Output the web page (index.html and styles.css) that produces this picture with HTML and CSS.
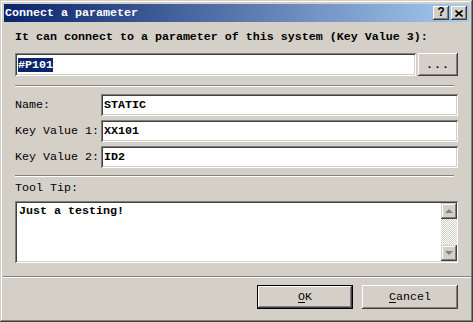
FILE: index.html
```html
<!DOCTYPE html>
<html>
<head>
<meta charset="UTF-8">
<title>Connect a parameter</title>
<link rel="stylesheet" href="styles.css">
</head>
<body>

<div class="window">
	<div class="titlebar">
		<span class="titletext">Connect a parameter</span>
		<span class="tbtn help">?</span>
		<span class="tbtn close">
			<svg width="8" height="7" viewBox="0 0 8 7"><path d="M0.5 0.5 L7.5 6.5 M7.5 0.5 L0.5 6.5" stroke="#000" stroke-width="1.6"/></svg>
		</span>
	</div>

	<div class="content">
		<div class="toplabel">It can connect to a parameter of this system (Key Value 3):</div>
		<div class="paramrow">
			<div class="field param"><span class="sel">#P101</span></div>
			<div class="btn dots">...</div>
		</div>

		<div class="sep"></div>

		<div class="keys">
			<div class="keyrow">
				<div class="lbl">Name:</div>
				<div class="field val">STATIC</div>
			</div>
			<div class="keyrow">
				<div class="lbl">Key Value 1:</div>
				<div class="field val">XX101</div>
			</div>
			<div class="keyrow">
				<div class="lbl">Key Value 2:</div>
				<div class="field val">ID2</div>
			</div>
		</div>

		<div class="sep"></div>

		<div class="tiplabel">Tool Tip:</div>
		<div class="field memo">
			<div class="memotext">Just a testing!</div>
			<div class="vscroll">
				<div class="sbtn"><span class="arrow up"></span></div>
				<div class="track"></div>
				<div class="sbtn"><span class="arrow down"></span></div>
			</div>
		</div>
	</div>

	<div class="sep wide"></div>

	<div class="buttons">
		<div class="btn push default"><u>O</u>K</div>
		<div class="btn push"><u>C</u>ancel</div>
	</div>
</div>

</body>
</html>
```

FILE: styles.css
```css
/* win2000 style dialog */

body {
	margin: 0;
	background: #d4d0c8;
	font-family: "Liberation Mono", "DejaVu Sans Mono", monospace;
	font-size: 11.67px;
	color: #000;
}
.window {
	width: 473px;
	height: 322px;
	box-sizing: border-box;
	padding: 4px 4px;
	background: #d4d0c8;
	box-shadow: inset -1px -1px #404040, inset 1px 1px #d4d0c8,
		inset -2px -2px #808080, inset 2px 2px #fff;
}
.titlebar {
	height: 18px;
	display: flex;
	align-items: center;
	padding: 0 2px 0 1px;
	background: linear-gradient(to right, #0a246a, #a6caf0);
}
.titletext {
	flex: 1;
	color: #fff;
	font-weight: bold;
}
.tbtn {
	width: 16px;
	height: 14px;
	box-sizing: border-box;
	display: flex;
	align-items: center;
	justify-content: center;
	background: #d4d0c8;
	box-shadow: inset -1px -1px #404040, inset 1px 1px #fff,
		inset -2px -2px #808080;
	font-weight: bold;
	font-size: 12px;
}
.help { margin-right: 2px; }

.content { padding: 0 11px; }

.toplabel {
	font-weight: bold;
	margin-top: 9px;
	height: 13px;
	line-height: 13px;
}
.paramrow {
	display: flex;
	gap: 2px;
	margin-top: 9px;
}
.field {
	background: #fff;
	box-sizing: border-box;
	box-shadow: inset 1px 1px #808080, inset -1px -1px #fff,
		inset 2px 2px #404040, inset -2px -2px #d4d0c8;
	padding: 0 3px;
	font-weight: bold;
	display: flex;
	align-items: center;
}
.param {
	flex: 1;
	height: 23px;
}
.sel {
	background: #0a246a;
	color: #fff;
}
.btn {
	background: #d4d0c8;
	box-sizing: border-box;
	box-shadow: inset -1px -1px #404040, inset 1px 1px #fff,
		inset -2px -2px #808080, inset 2px 2px #d4d0c8;
	display: flex;
	align-items: center;
	justify-content: center;
}
.dots {
	width: 40px;
	height: 23px;
	font-weight: bold;
	letter-spacing: 1px;
}

.sep {
	height: 0;
	border-top: 1px solid #808080;
	border-bottom: 1px solid #fff;
	margin: 9px 4px 0 0;
}
.keys + .sep { margin-top: 7px; }
.sep.wide { margin: 13px -2px 0 -1px; }

.keys {
	display: flex;
	flex-direction: column;
	gap: 4px;
	margin-top: 7px;
}
.keyrow {
	display: flex;
	align-items: center;
}
.lbl { width: 86px; }
.val {
	flex: 1;
	height: 22px;
}

.tiplabel {
	margin-top: 5px;
	height: 13px;
	line-height: 13px;
}
.memo {
	margin-top: 6px;
	height: 62px;
	padding: 2px 1px 2px 2px;
	align-items: stretch;
}
.memotext {
	flex: 1;
	padding: 1px 2px;
}
.vscroll {
	width: 16px;
	display: flex;
	flex-direction: column;
}
.track {
	flex: 1;
	background-image: conic-gradient(#d4d0c8 25%, #fff 0 50%, #d4d0c8 0 75%, #fff 0);
	background-size: 2px 2px;
}
.sbtn {
	height: 16px;
	background: #d4d0c8;
	box-shadow: inset -1px -1px #404040, inset 1px 1px #d4d0c8,
		inset -2px -2px #808080, inset 2px 2px #fff;
	display: flex;
	align-items: center;
	justify-content: center;
}
.arrow {
	width: 0;
	height: 0;
	border-left: 4px solid transparent;
	border-right: 4px solid transparent;
}
.arrow.up { border-bottom: 4px solid #808080; }
.arrow.down { border-top: 4px solid #808080; }

.buttons {
	display: flex;
	justify-content: flex-end;
	gap: 9px;
	margin-top: 7px;
	padding-right: 11px;
}
.push {
	width: 96px;
	height: 24px;
	font-weight: normal;
}
.push u { text-underline-offset: 2px; }
.default {
	box-shadow: inset 0 0 0 1px #000, inset -2px -2px #404040, inset 2px 2px #fff,
		inset -3px -3px #808080;
}
```
